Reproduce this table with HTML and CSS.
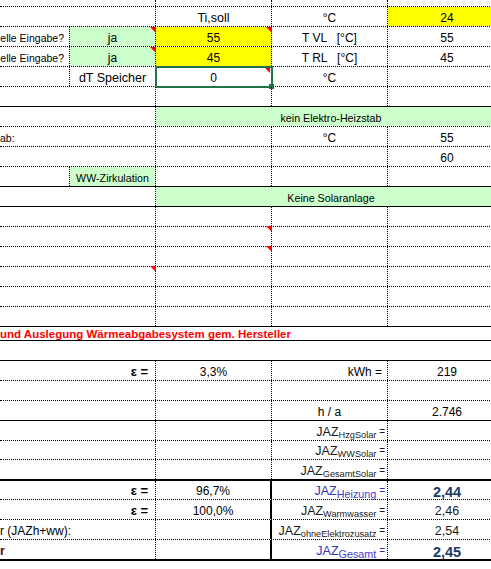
FILE: index.html
```html
<!DOCTYPE html>
<html lang="de">
<head>
<meta charset="utf-8">
<title>JAZ Berechnung</title>
<link rel="stylesheet" href="styles.css">
</head>
<body>
<div class="sheet">
  <div class="row h7 dot">
    <div class="c"></div><div class="c r"></div><div class="c r"></div><div class="c r"></div><div class="c"></div>
  </div>
  <div class="row dot">
    <div class="c"></div><div class="c r"></div>
    <div class="c r ctr big">Ti,soll</div>
    <div class="c r ctr">°C</div>
    <div class="c ctr yel">24</div>
  </div>
  <div class="row dot">
    <div class="c r rgt lbl">elle Eingabe?</div>
    <div class="c r ctr grn">ja<span class="tri"></span></div>
    <div class="c r ctr yel">55<span class="tri"></span></div>
    <div class="c r ctr">T VL   [°C]</div>
    <div class="c ctr">55</div>
  </div>
  <div class="row dot">
    <div class="c r rgt lbl">elle Eingabe?</div>
    <div class="c r ctr grn">ja<span class="tri"></span></div>
    <div class="c r ctr yel">45</div>
    <div class="c r ctr">T RL   [°C]</div>
    <div class="c ctr">45</div>
  </div>
  <div class="row dot">
    <div class="c r"></div>
    <div class="c r ctr big">dT Speicher</div>
    <div class="c r ctr">0<span class="tri tri-in"></span><span class="sel"></span><span class="handle"></span></div>
    <div class="c r ctr">°C</div>
    <div class="c"></div>
  </div>
  <div class="row sol">
    <div class="c"></div><div class="c r"></div><div class="c r"></div><div class="c r"></div><div class="c"></div>
  </div>
  <div class="row dot">
    <div class="c"></div><div class="c r"></div>
    <div class="c span3 ctr grn small">kein Elektro-Heizstab</div>
  </div>
  <div class="row dot">
    <div class="c lbl left0">ab:</div>
    <div class="c r"></div>
    <div class="c r"></div>
    <div class="c r ctr">°C</div>
    <div class="c ctr">55</div>
  </div>
  <div class="row dot">
    <div class="c"></div><div class="c r"></div><div class="c r"></div><div class="c r"></div>
    <div class="c ctr">60</div>
  </div>
  <div class="row sol">
    <div class="c r"></div>
    <div class="c r ctr grn small">WW-Zirkulation</div>
    <div class="c r"></div><div class="c r"></div><div class="c"></div>
  </div>
  <div class="row sol">
    <div class="c"></div><div class="c r"></div>
    <div class="c span3 ctr grn small">Keine Solaranlage</div>
  </div>
  <div class="row dot">
    <div class="c"></div><div class="c r"></div><div class="c r"></div><div class="c r"></div><div class="c"></div>
  </div>
  <div class="row dot">
    <div class="c"></div><div class="c r"></div><div class="c r"><span class="tri tri-up"></span></div><div class="c r"></div><div class="c"></div>
  </div>
  <div class="row dot">
    <div class="c"></div><div class="c r"></div><div class="c r"><span class="tri tri-up"></span></div><div class="c r"></div><div class="c"></div>
  </div>
  <div class="row dot">
    <div class="c"></div><div class="c r"><span class="tri tri-up"></span></div><div class="c r"></div><div class="c r"></div><div class="c"></div>
  </div>
  <div class="row dot">
    <div class="c"></div><div class="c r"></div><div class="c r"></div><div class="c r"></div><div class="c"></div>
  </div>
  <div class="row sol">
    <div class="c"></div><div class="c r"></div><div class="c r"></div><div class="c r"></div><div class="c"></div>
  </div>
  <div class="row h14 sol">
    <div class="c span5 warn">und Auslegung Wärmeabgabesystem gem. Hersteller</div>
  </div>
  <div class="row sol">
    <div class="c span5"></div>
  </div>
  <div class="row dot">
    <div class="c span2 r rgt eps">ε =</div>
    <div class="c r ctr">3,3%</div>
    <div class="c r rgt pad-kwh">kWh =</div>
    <div class="c ctr">219</div>
  </div>
  <div class="row dot">
    <div class="c span2 r"></div><div class="c r"></div><div class="c r"></div><div class="c"></div>
  </div>
  <div class="row sol">
    <div class="c span2 r"></div><div class="c r"></div>
    <div class="c r ctr">h / a</div>
    <div class="c ctr">2.746</div>
  </div>
  <div class="row dot">
    <div class="c span2 r"></div><div class="c r"></div>
    <div class="c r rgt jaz">JAZ<span class="sub">HzgSolar</span><span class="eq"> =</span></div>
    <div class="c"></div>
  </div>
  <div class="row h19 dot">
    <div class="c span2 r"></div><div class="c r"></div>
    <div class="c r rgt jaz">JAZ<span class="sub">WWSolar</span><span class="eq"> =</span></div>
    <div class="c"></div>
  </div>
  <div class="row h21 thk">
    <div class="c span2 r"></div><div class="c r"></div>
    <div class="c r rgt jaz">JAZ<span class="sub">GesamtSolar</span><span class="eq"> =</span></div>
    <div class="c"></div>
  </div>
  <div class="row h19 dot">
    <div class="c span2 r rgt eps">ε =</div>
    <div class="c rt ctr">96,7%</div>
    <div class="c r rgt jaz blue">JAZ<span class="sub bsub">Heizung</span><span class="eq"> =</span></div>
    <div class="c ctr res">2,44</div>
  </div>
  <div class="row dot">
    <div class="c span2 r rgt eps">ε =</div>
    <div class="c rt ctr">100,0%</div>
    <div class="c r rgt jaz">JAZ<span class="sub">Warmwasser</span><span class="eq"> =</span></div>
    <div class="c ctr val">2,46</div>
  </div>
  <div class="row dot">
    <div class="c span2 r left0">r (JAZh+ww):</div>
    <div class="c rt"></div>
    <div class="c r rgt jaz">JAZ<span class="sub">ohneElektrozusatz</span><span class="eq"> =</span></div>
    <div class="c ctr val">2,54</div>
  </div>
  <div class="row h21 thk">
    <div class="c span2 r left0 tail">r</div>
    <div class="c rt"></div>
    <div class="c r rgt jaz blue">JAZ<span class="sub bsub">Gesamt</span><span class="eq"> =</span></div>
    <div class="c ctr res">2,45</div>
  </div>
</div>
</body>
</html>
```
FILE: styles.css
```css
html, body {
  margin: 0;
  padding: 0;
  background: #fff;
}

body {
  font-family: "Liberation Sans", Arial, sans-serif;
  font-size: 12px;
  color: #000;
}

.sheet {
  width: 491px;
  height: 569px;
  overflow: hidden;
}

.row {
  display: grid;
  grid-template-columns: 70px 86px 116px 116px 118px;
  width: 506px;
  height: 20px;
  box-sizing: border-box;
}

.h7 { height: 7px; }
.h14 { height: 14px; }
.h19 { height: 19px; }
.h21 { height: 21px; }

.dot { border-bottom: 1px dotted #000; }
.sol { border-bottom: 1px solid #000; }
.thk { border-bottom: 2px solid #000; }

.c {
  position: relative;
  display: flex;
  align-items: flex-end;
  box-sizing: border-box;
  min-width: 0;
  white-space: pre;
  line-height: 14px;
  padding: 0 2px 1px;
}

.r { border-right: 1px dotted #000; }
.rt { border-right: 2px solid #000; }

.ctr { justify-content: center; }
.rgt { justify-content: flex-end; }
.left0 { padding-left: 0; }

.span2 { grid-column: span 2; }
.span3 { grid-column: span 3; }
.span5 { grid-column: span 5; }

.yel { background: #ffff00; }
.grn { background: #ccffcc; }

.big { font-size: 12.5px; }
.small { font-size: 10.7px; }
.lbl { font-size: 10.5px; padding-left: 0; padding-right: 5px; }
.pad-kwh { padding-right: 5px; }

.eps {
  font-weight: bold;
  font-size: 13px;
  padding-right: 7px;
}

.warn {
  color: #ff0000;
  font-weight: bold;
  font-size: 11.5px;
  padding: 0 0 1px 0;
}

.tail {
  font-weight: bold;
  font-size: 12.5px;
  color: #5a0808;
}

.jaz {
  font-size: 12.5px;
  color: #1a1a1a;
  padding-right: 2px;
}

.jaz .sub {
  font-size: 9.2px;
  position: relative;
  top: 3px;
}

.jaz .eq {
  font-size: 10px;
}

.blue { color: #3333b0; }
.jaz .bsub {
  font-size: 10.8px;
  color: #4a3ad0;
}

.val { font-size: 12.5px; color: #1a1a1a; }

.res {
  font-size: 14.5px;
  font-weight: bold;
  color: #203864;
  padding-bottom: 0;
}

.tri {
  position: absolute;
  top: 0;
  right: -1px;
  width: 0;
  height: 0;
  border-top: 6px solid #ff0000;
  border-left: 6px solid transparent;
}

.tri-up {
  top: -1px;
}

.tri-in {
  top: 1px;
  right: 1px;
  border-top-width: 5px;
  border-left-width: 5px;
}

.sel {
  position: absolute;
  left: -1px;
  top: -1px;
  width: 118px;
  height: 22px;
  box-sizing: border-box;
  border: 2px solid #217346;
}

.handle {
  position: absolute;
  left: 113px;
  top: 17px;
  width: 5px;
  height: 5px;
  background: #217346;
}
```
